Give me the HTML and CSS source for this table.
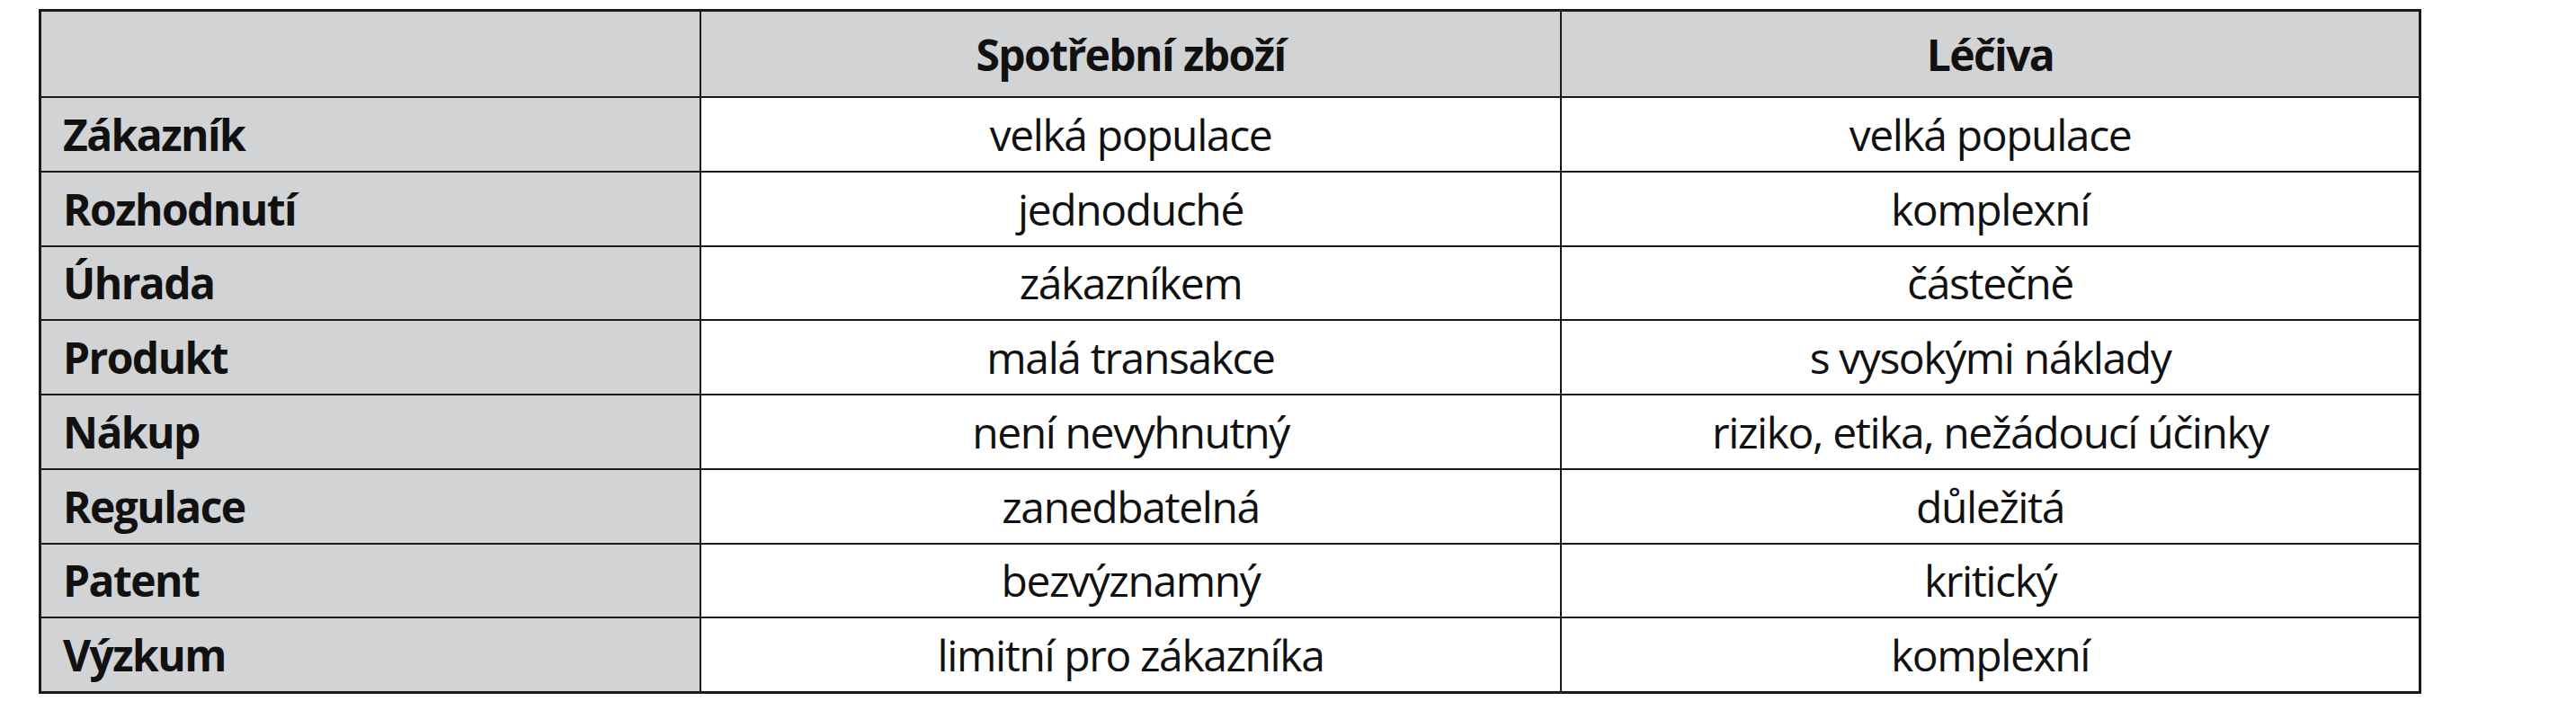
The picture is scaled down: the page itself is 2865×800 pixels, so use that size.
FILE: index.html
```html
<!DOCTYPE html>
<html lang="cs">
<head>
<meta charset="utf-8">
<title>Spotřební zboží vs. Léčiva</title>
<link rel="stylesheet" href="styles.css">
</head>
<body>
<div class="table">
  <div class="cell head corner"></div>
  <div class="cell head">Spotřební zboží</div>
  <div class="cell head">Léčiva</div>

  <div class="cell label">Zákazník</div>
  <div class="cell">velká populace</div>
  <div class="cell">velká populace</div>

  <div class="cell label">Rozhodnutí</div>
  <div class="cell">jednoduché</div>
  <div class="cell">komplexní</div>

  <div class="cell label">Úhrada</div>
  <div class="cell">zákazníkem</div>
  <div class="cell">částečně</div>

  <div class="cell label">Produkt</div>
  <div class="cell">malá transakce</div>
  <div class="cell">s vysokými náklady</div>

  <div class="cell label">Nákup</div>
  <div class="cell">není nevyhnutný</div>
  <div class="cell">riziko, etika, nežádoucí účinky</div>

  <div class="cell label">Regulace</div>
  <div class="cell">zanedbatelná</div>
  <div class="cell">důležitá</div>

  <div class="cell label">Patent</div>
  <div class="cell">bezvýznamný</div>
  <div class="cell">kritický</div>

  <div class="cell label">Výzkum</div>
  <div class="cell">limitní pro zákazníka</div>
  <div class="cell">komplexní</div>
</div>
</body>
</html>
```

FILE: styles.css
```css
html, body {
  margin: 0;
  padding: 0;
  background: #ffffff;
}

body {
  padding: 10px 0 0 43px;
  font-family: "Open Sans", "Noto Sans", "Liberation Sans", sans-serif;
  color: #111111;
}

.table {
  display: grid;
  width: 2650px;
  box-sizing: border-box;
  grid-template-columns: 732px 955px 953px;
  grid-template-rows: 94px repeat(8, 80.75px);
  gap: 2px;
  padding: 3px;
  background: #1a1a1a;
}

.cell {
  background: #ffffff;
  display: flex;
  align-items: center;
  justify-content: center;
  font-size: 48px;
  font-weight: 400;
  letter-spacing: -1.4px;
  white-space: nowrap;
}

.head {
  background: #d1d3d4;
  font-weight: 700;
  letter-spacing: -1.6px;
}

.label {
  background: #d1d3d4;
  justify-content: flex-start;
  padding-left: 24px;
  font-weight: 700;
  letter-spacing: -1.6px;
}
```
